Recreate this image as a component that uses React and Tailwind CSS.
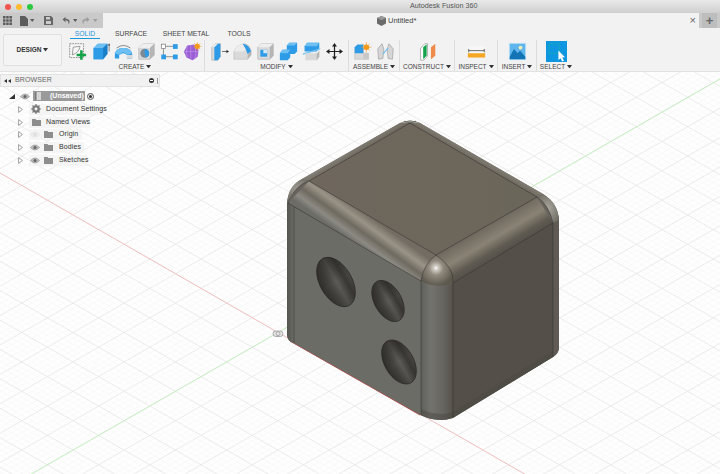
import React from "react";

const FONT = { fontFamily: '"Liberation Sans", Arial, sans-serif' };

const Caret = ({ c = "#333", w = 6, h = 4 }) => (
  <svg width={w} height={h} viewBox="0 0 6 4" className="shrink-0"><path d="M0 0H6L3 4Z" fill={c} /></svg>
);

const Icon = ({ children, size = 19 }) => (
  <svg width={size} height={size} viewBox="0 0 22 22" className="shrink-0">{children}</svg>
);

const B1 = "#2e9be6", B2 = "#6fc0f2", B3 = "#1b7fc8", G1 = "#d9d9d9", G2 = "#b5b5b5";

const I = {
  sketch: (
    <Icon>
      <rect x="2" y="2" width="16" height="16" fill="#f7f7f7" stroke="#666" strokeWidth=".8" strokeDasharray="2 1" />
      <path d="M5 15L6 6 14 5Q13 12 5 15Z" fill="none" stroke="#777" strokeWidth=".8" />
      <path d="M15 10h3v4h4v3h-4v4h-3v-4h-4v-3h4z" fill="#12a34a" transform="translate(-1 -.5)" />
    </Icon>
  ),
  extrude: (
    <Icon>
      <path d="M3 7L8 2H19V14L14 20H3Z" fill={B1} />
      <path d="M3 7H14V20H3Z" fill={B1} />
      <path d="M3 7L8 2H19L14 7Z" fill={B2} />
      <path d="M14 7L19 2V14L14 20Z" fill={B3} />
      <path d="M21 2V11" stroke="#555" strokeWidth=".8" />
      <path d="M19.8 4L21 1.6 22 4Z" fill="#333" />
    </Icon>
  ),
  revolve: (
    <Icon>
      <path d="M3 7Q11 1 19 7" fill="none" stroke="#777" strokeWidth="1" />
      <path d="M1 13Q3 7 11 7T21 13V19H15V15Q13 13 11 13T6 15V19H1Z" fill={B1} />
      <path d="M1 13Q3 7 11 7T21 13L15 15Q13 12 11 12T6 15Z" fill={B2} />
      <path d="M15 15H21V19H15Z" fill={G1} />
    </Icon>
  ),
  hole: (
    <Icon>
      <path d="M2 7L7 2H20V15L15 20H2Z" fill={G1} stroke="#999" strokeWidth=".5" />
      <path d="M2 7L7 2H20L15 7Z" fill="#efefef" />
      <path d="M15 7L20 2V15L15 20Z" fill={G2} />
      <circle cx="9" cy="13" r="5.2" fill="#7b8a96" />
      <path d="M9 13L9 8A5 5 0 0 1 14 13A5 5 0 0 1 10 18Z" fill={B1} />
    </Icon>
  ),
  pattern: (
    <Icon>
      <path d="M5 5H17M5 17H17M4 5V17" stroke="#777" strokeWidth=".9" fill="none" />
      <rect x="1.5" y="2.5" width="5" height="5" fill="#fff" stroke="#777" strokeWidth=".8" />
      <rect x="15" y="2.5" width="5.5" height="5.5" fill={B1} />
      <rect x="1.5" y="14.5" width="5.5" height="5.5" fill={B1} />
      <rect x="15" y="14.5" width="5.5" height="5.5" fill={B1} />
    </Icon>
  ),
  create: (
    <Icon>
      <path d="M1 11L5 4 13 3 18 9 17 17 11 21 4 18Z" fill="#9a5fd6" />
      <path d="M1 11L18 11M9 3.5V21M5 4Q3 12 5 18M14 4Q16 12 14 20" stroke="#c49ae8" strokeWidth=".7" fill="none" />
      <circle cx="16.5" cy="5" r="3" fill="#f59a1b" />
      <path d="M16.5 0V10M11.5 5H21.5M13 1.5L20 8.5M20 1.5L13 8.5" stroke="#f59a1b" strokeWidth=".7" />
    </Icon>
  ),
  press: (
    <Icon>
      <path d="M2 6L6 2H12V17L9 21H2Z" fill={G1} stroke="#999" strokeWidth=".5" />
      <path d="M5 6L9 2H12V17L9 21H5Z" fill={B1} />
      <path d="M5 6H2L6 2H9Z" fill="#eee" />
      <path d="M14 11H21" stroke="#333" strokeWidth=".8" />
      <path d="M19 9V13L22 11Z" fill="#333" />
    </Icon>
  ),
  fillet: (
    <Icon>
      <path d="M1 11L5 5 12 2Q19 2 21 10V15L17 20H1Z" fill={G1} stroke="#aaa" strokeWidth=".5" />
      <path d="M11 2Q19 3 21 11L17 14Q15 8 11 2Z" fill={B1} />
      <path d="M1 11L5 5 11 2 15 9 12 11Z" fill="#ececec" />
      <path d="M17 14L21 11V15L17 20Z" fill={G2} />
    </Icon>
  ),
  shell: (
    <Icon>
      <path d="M2 6L6 2H20V16L16 20H2Z" fill={G1} stroke="#999" strokeWidth=".5" />
      <path d="M2 6L6 2H20L16 6Z" fill="#eee" />
      <path d="M16 6L20 2V16L16 20Z" fill={G2} />
      <rect x="5" y="9" width="8" height="8" fill={B1} />
      <rect x="8.5" y="9" width="4.5" height="4" fill="#cfe9fa" />
    </Icon>
  ),
  combine: (
    <Icon>
      <path d="M1 13L4 9H9V4L12 1H21V11L18 14H13V18L10 21H1Z" fill={B1} />
      <path d="M9 4L12 1H21L18 4Z M1 13L4 9H13L10 13Z" fill={B2} />
    </Icon>
  ),
  offset: (
    <Icon>
      <path d="M3 5L6 1H20V7L17 11H3Z" fill={B1} />
      <path d="M3 5L6 1H20L17 5Z" fill={B2} />
      <path d="M1 12L21 6" stroke={B2} strokeWidth="1.3" transform="translate(0 2)" />
      <path d="M4 13H18L20 10V17L17 21H4Z" fill={G1} />
      <path d="M17 14L20 10V17L17 21Z" fill={G2} />
    </Icon>
  ),
  move: (
    <Icon size={17}>
      <path d="M11 3V19M3 11H19" stroke="#222" strokeWidth="1.6" />
      <path d="M11 0L14.2 4.5H7.8ZM11 22L7.8 17.5H14.2ZM0 11L4.5 7.8V14.2ZM22 11L17.5 14.2V7.8Z" fill="#222" />
    </Icon>
  ),
  newComp: (
    <Icon>
      <path d="M2 7H12V13H18V20H2Z" fill={G1} stroke="#aaa" strokeWidth=".5" />
      <path d="M2 6L5 3H12V13H2Z" fill={B1} />
      <path d="M12 13H18V20H12Z" fill="#c8c8c8" />
      <circle cx="15.5" cy="6" r="3.2" fill="#f59a1b" />
      <path d="M15.5 0V12M9.5 6H21.5M11.5 2L19.5 10M19.5 2L11.5 10" stroke="#f59a1b" strokeWidth=".7" />
    </Icon>
  ),
  joint: (
    <Icon>
      <path d="M2 8L7 2 9 8 8 19 3 20Z" fill="#d6d6d6" stroke="#888" strokeWidth=".6" />
      <path d="M20 8L15 2 13 8 14 19 19 20Z" fill="#d6d6d6" stroke="#888" strokeWidth=".6" />
      <path d="M8 14L14 7" stroke={B2} strokeWidth="1.4" />
    </Icon>
  ),
  construct: (
    <Icon>
      <path d="M3 7L8 2H11V16L7 21H3Z" fill="#fff" stroke="#888" strokeWidth=".7" />
      <path d="M6 6L10 2.5V16L6 20Z" fill="#12a34a" />
      <path d="M15 6L20 2V16L15 20Z" fill="#f08a4b" />
    </Icon>
  ),
  inspect: (
    <Icon>
      <rect x="1" y="5" width="20" height="13" fill="#f7f7f7" />
      <path d="M2 8V12M20 8V12M2 10H20" stroke="#444" strokeWidth=".9" />
      <rect x="1" y="13" width="20" height="5" fill="#f5a623" />
    </Icon>
  ),
  insert: (
    <Icon>
      <rect x="1" y="1" width="20" height="20" fill="#c8e6fa" />
      <rect x="2" y="2" width="18" height="18" fill="#5fb5ec" />
      <circle cx="14.5" cy="6.5" r="2.2" fill="#f4f0b5" />
      <path d="M2 17L7 8 11 13 14 10 20 17V20H2Z" fill="#1273b5" />
    </Icon>
  ),
  select: (
    <Icon size={21}>
      <rect x="0" y="0" width="22" height="22" fill="#0f96e0" />
      <rect x="3" y="3" width="11" height="10" fill="none" stroke="#17b7a0" strokeWidth=".9" strokeDasharray="1.5 1" />
      <path d="M13 10L13 20 15.2 18 17 21.5 18.8 20.6 17 17.4 19.8 17Z" fill="#fff" />
    </Icon>
  ),
};

const Group = ({ label, w, pl = 0, center, border = true, icons }) => (
  <div className={`flex flex-col shrink-0 ${border ? "border-r border-[#dcdcdc]" : ""}`} style={{ width: w }}>
    <div className={`flex items-center h-[22px] ${center ? "justify-center" : ""}`} style={{ paddingLeft: pl }}>
      {icons.map((ic, i) => (
        <div key={i} className="w-[23px] flex justify-center">{ic}</div>
      ))}
    </div>
    <div className="flex items-center justify-center gap-[2px] h-[9px] text-[6.5px] text-[#444] whitespace-nowrap">
      <span>{label}</span><Caret w={5} h={3.5} />
    </div>
  </div>
);

const Eye = ({ faded }) => (
  <svg width="10" height="7" viewBox="0 0 10 7" className="shrink-0">
    <path d="M.5 3.5Q5 -1.5 9.5 3.5Q5 8.5 .5 3.5Z" fill={faded ? "#eee" : "#bdbdbd"} stroke={faded ? "#ddd" : "#888"} strokeWidth=".6" />
    <circle cx="5" cy="3.5" r="1.6" fill={faded ? "#ddd" : "#666"} />
  </svg>
);

const Folder = () => (
  <svg width="9" height="7" viewBox="0 0 9 7" className="shrink-0"><path d="M0 0H3.5L4.2 1H9V7H0Z" fill="#8d8d8d" /></svg>
);

const Gear = () => (
  <svg width="10" height="10" viewBox="0 0 10 10" className="shrink-0">
    <circle cx="5" cy="5" r="3" fill="none" stroke="#7a7a7a" strokeWidth="1.7" />
    <path d="M5 0V10M0 5H10M1.5 1.5L8.5 8.5M8.5 1.5L1.5 8.5" stroke="#7a7a7a" strokeWidth="1.2" />
    <circle cx="5" cy="5" r="1.4" fill="#f2f2f2" />
  </svg>
);

const Open = () => (
  <svg width="5" height="7" viewBox="0 0 5 7" className="shrink-0"><path d="M.6.6L4.4 3.5.6 6.4Z" fill="#fff" stroke="#777" strokeWidth=".7" /></svg>
);

const Row = ({ w, eye, faded, icon, label }) => (
  <div className="flex items-center h-[12.7px]">
    <div className="w-[29px] shrink-0 flex justify-end pr-[6px]"><Open /></div>
    <div className="flex items-center bg-[#f3f3f3]/80 h-[11px] pl-[1px] gap-[2px] whitespace-nowrap" style={{ width: w }}>
      {eye && <Eye faded={faded} />}
      <div className="flex justify-center w-[10px] ml-[1px] shrink-0">{icon}</div>
      <span className={`text-[#333] text-[7px] tracking-[0.1px] ${eye ? "ml-[4px]" : "ml-[3px]"}`}>{label}</span>
    </div>
  </div>
);

function gridLines() {
  const out = [];
  const m = 0.574;
  const step = 5.88;
  for (let k = -130; k <= 130; k++) {
    const major = k % 5 === 0;
    const c1 = 173 + k * step;
    const c2 = 492 + k * step;
    const props = { stroke: major ? "#e6e6e6" : "#f6f6f6", strokeWidth: major ? 0.8 : 0.6 };
    out.push(<line key={"a" + k} x1="0" y1={c1} x2="720" y2={c1 + m * 720} {...props} />);
    out.push(<line key={"b" + k} x1="0" y1={c2} x2="720" y2={c2 - m * 720} {...props} />);
  }
  return out;
}

const Hole = ({ cx, cy, rx, ry }) => (
  <g transform={`rotate(-30 ${cx} ${cy})`}>
    <ellipse cx={cx} cy={cy} rx={rx} ry={ry} fill="url(#h1)" stroke="#2a2926" strokeWidth=".7" />
    <ellipse cx={cx} cy={cy} rx={rx} ry={ry} fill="url(#hShade)" />
  </g>
);

const Scene = () => (
  <svg className="absolute inset-0" width="720" height="402" viewBox="0 72 720 402">
    <defs>
      <linearGradient id="filletFL" gradientUnits="userSpaceOnUse" x1="372" y1="218" x2="354" y2="243">
        <stop offset="0" stopColor="#726c62" />
        <stop offset=".28" stopColor="#9a9488" />
        <stop offset=".55" stopColor="#6f6a60" />
        <stop offset=".8" stopColor="#8c8a83" />
        <stop offset="1" stopColor="#6d6d68" />
      </linearGradient>
      <linearGradient id="filletFR" gradientUnits="userSpaceOnUse" x1="487" y1="226" x2="503" y2="253">
        <stop offset="0" stopColor="#6f695f" />
        <stop offset=".45" stopColor="#8a8375" />
        <stop offset=".8" stopColor="#5f5a51" />
        <stop offset="1" stopColor="#55504a" />
      </linearGradient>
      <linearGradient id="filletBL" gradientUnits="userSpaceOnUse" x1="360" y1="152" x2="354" y2="142">
        <stop offset="0" stopColor="#6f695f" />
        <stop offset="1" stopColor="#96938c" />
      </linearGradient>
      <linearGradient id="filletBR" gradientUnits="userSpaceOnUse" x1="473" y1="160" x2="480" y2="148">
        <stop offset="0" stopColor="#6f695f" />
        <stop offset="1" stopColor="#9a978f" />
      </linearGradient>
      <linearGradient id="vcorner" gradientUnits="userSpaceOnUse" x1="421" y1="0" x2="453" y2="0">
        <stop offset="0" stopColor="#5f5f5b" />
        <stop offset=".3" stopColor="#73736e" />
        <stop offset=".7" stopColor="#66645f" />
        <stop offset="1" stopColor="#56524c" />
      </linearGradient>
      <linearGradient id="vleft" gradientUnits="userSpaceOnUse" x1="287" y1="0" x2="294" y2="0">
        <stop offset="0" stopColor="#55554f" />
        <stop offset="1" stopColor="#6c6c67" />
      </linearGradient>
      <linearGradient id="topFace" gradientUnits="userSpaceOnUse" x1="309" y1="0" x2="537" y2="0">
        <stop offset="0" stopColor="#6f675d" />
        <stop offset="1" stopColor="#6b665a" />
      </linearGradient>
      <radialGradient id="ballF" gradientUnits="userSpaceOnUse" cx="436" cy="268" r="18">
        <stop offset="0" stopColor="#ffffff" />
        <stop offset=".1" stopColor="#d8d4cc" />
        <stop offset=".4" stopColor="#908a7e" />
        <stop offset="1" stopColor="#5d584e" />
      </radialGradient>
      <radialGradient id="ballS" cx=".5" cy=".5" r=".7">
        <stop offset="0" stopColor="#a8a59c" />
        <stop offset="1" stopColor="#66635b" />
      </radialGradient>
      <linearGradient id="h1" x1="0" y1="0" x2="1" y2="0">
        <stop offset="0" stopColor="#2f2e2b" />
        <stop offset=".3" stopColor="#454440" />
        <stop offset=".52" stopColor="#5e5c58" />
        <stop offset=".78" stopColor="#3a3936" />
        <stop offset="1" stopColor="#4a4845" />
      </linearGradient>
      <linearGradient id="hShade" x1="0" y1="0" x2="0" y2="1">
        <stop offset="0" stopColor="#22211f" stopOpacity=".55" />
        <stop offset=".5" stopColor="#22211f" stopOpacity="0" />
        <stop offset="1" stopColor="#22211f" stopOpacity=".25" />
      </linearGradient>
    </defs>

    <rect x="0" y="72" width="720" height="402" fill="#fefefe" />
    {gridLines()}
    <line x1="0" y1="173" x2="720" y2="586" stroke="#f4bcbc" strokeWidth=".9" />
    <line x1="0" y1="492" x2="720" y2="79" stroke="#bff0ba" strokeWidth=".9" />

    <path d="M400 123Q410 118 420 123L543 194Q558 203 559 220V348Q559 353 553 357L452 418Q437 423 420 415L293 343Q287 340 287 335V205Q288 186 302 179Z" fill="#66635c" />
    <path d="M290 341L420 415" stroke="#b0504c" strokeWidth="1" fill="none" />
    <path d="M287 202L294 207V343H293Q287 340 287 335Z" fill="url(#vleft)" />
    <path d="M294 207L421 281V415L294 343Z" fill="#6c6c67" />
    <path d="M421 281Q437 289 453 283V418Q437 423 421 415Z" fill="url(#vcorner)" />
    <path d="M453 283L553 223V357L453 418Z" fill="#544f49" />
    <path d="M553 223L559 216V348Q559 353 553 357Z" fill="#5f5a53" />
    <path d="M453 418Q437 423 421 415V409Q437 417 453 412L553 351V357Z" fill="#4a4742" opacity=".5" />
    <path d="M309 181L410 123 400 123 302 179Z" fill="url(#filletBL)" />
    <path d="M410 123L537 197 543 194 420 123Q414 120 410 123Z" fill="url(#filletBR)" />
    <path d="M309 181L436 255 421 281 288 203Z" fill="url(#filletFL)" />
    <path d="M436 255L537 197 553 223 453 283Z" fill="url(#filletFR)" />
    <path d="M410 123L537 197 436 255 309 181Z" fill="url(#topFace)" />
    <path d="M436 255Q423 265 421 281Q437 289 453 283Q455 268 436 255Z" fill="url(#ballF)" />
    <path d="M302 179Q288 186 287 203L289 203Q294 186 309 181Z" fill="url(#ballS)" />
    <path d="M537 197Q549 205 553 223L559 220Q558 203 543 194Z" fill="url(#ballS)" />
    <path d="M400 123Q410 118 420 123L410 123Z" fill="#9c9a92" />

    <g stroke="#2e2c28" strokeWidth=".55" strokeOpacity=".85" fill="none">
      <path d="M410 123L537 197 436 255 309 181Z" />
      <path d="M288 203L421 281M453 283L553 223" />
      <path d="M294 207V343M421 281V415M453 283V418M553 223V357" />
      <path d="M436 255Q423 265 421 281M436 255Q455 268 453 283" />
      <path d="M309 181Q294 186 288 203M537 197Q549 205 553 223M404 121L410 123 416 121" />
    </g>

    <Hole cx={336} cy={282} rx={16} ry={27} />
    <Hole cx={388} cy={301} rx={13.5} ry={22.5} />
    <Hole cx={399} cy={362} rx={14.5} ry={24} />

    <g fill="#e4e4e4" stroke="#9b9b9b" strokeWidth=".8">
      <rect x="273" y="331" width="10" height="5.5" rx="2.7" />
      <circle cx="278" cy="333.7" r="2" />
    </g>
  </svg>
);

export default function App() {
  return (
    <div className="relative w-[720px] h-[474px] overflow-hidden flex flex-col bg-white" style={FONT}>
      <div className="h-[13px] shrink-0 bg-gradient-to-b from-[#e9e9e9] to-[#cfcfcf] flex items-center pl-[5px] gap-[5px]">
        <span className="w-[6px] h-[6px] rounded-full bg-[#f2544e]" />
        <span className="w-[6px] h-[6px] rounded-full bg-[#f8bc2e]" />
        <span className="w-[6px] h-[6px] rounded-full bg-[#2bc840]" />
        <span className="ml-[372px] text-[7.2px] text-[#555] whitespace-nowrap">Autodesk Fusion 360</span>
      </div>

      <div className="h-[15px] shrink-0 flex bg-[#c9c9c9]">
        <div className="w-[103px] shrink-0 flex items-center text-[#5a5a5a]">
          <svg width="9" height="9" viewBox="0 0 9 9" className="ml-[3px]">
            <path d="M0 0H2.5V2.5H0ZM3.2 0H5.7V2.5H3.2ZM6.4 0H9V2.5H6.4ZM0 3.2H2.5V5.7H0ZM3.2 3.2H5.7V5.7H3.2ZM6.4 3.2H9V5.7H6.4ZM0 6.4H2.5V9H0ZM3.2 6.4H5.7V9H3.2ZM6.4 6.4H9V9H6.4Z" fill="#5c5c5c" />
          </svg>
          <svg width="8" height="10" viewBox="0 0 8 10" className="ml-[8px]"><path d="M0 0H5L8 3V10H0Z" fill="#5c5c5c" /></svg>
          <span className="ml-[2px]"><Caret c="#5c5c5c" w={4.5} h={3} /></span>
          <svg width="9" height="9" viewBox="0 0 9 9" className="ml-[9px]">
            <path d="M0 0H7L9 2V9H0Z" fill="#666" /><rect x="2" y="1" width="4" height="2.5" fill="#ccc" /><rect x="2" y="5" width="5" height="3" fill="#ccc" />
          </svg>
          <svg width="9" height="9" viewBox="0 0 9 9" className="ml-[9px]">
            <path d="M3.5 .8L.5 3.5 3.5 6.2V4.3C5.5 4.3 6.7 5.3 6.7 8.5 8.5 5 7.5 2.7 3.5 2.7Z" fill="#666" />
          </svg>
          <span className="ml-[2px]"><Caret c="#5c5c5c" w={4.5} h={3} /></span>
          <svg width="9" height="9" viewBox="0 0 9 9" className="ml-[4px]">
            <path d="M5.5 .8L8.5 3.5 5.5 6.2V4.3C3.5 4.3 2.3 5.3 2.3 8.5 .5 5 1.5 2.7 5.5 2.7Z" fill="#9c9c9c" />
          </svg>
          <span className="ml-[3px]"><Caret c="#9c9c9c" w={4.5} h={3} /></span>
        </div>
        <div className="w-[596px] shrink-0 bg-[#f2f2f2] relative flex items-center">
          <div className="ml-[274px] flex items-center gap-[2px]">
            <svg width="9" height="10" viewBox="0 0 9 10">
              <path d="M4.5 0L9 2V7.5L4.5 10 0 7.5V2Z" fill="#6b6b6b" /><path d="M0 2L4.5 4 9 2 4.5 0Z" fill="#9a9a9a" />
            </svg>
            <span className="text-[7.5px] text-[#444]">Untitled*</span>
          </div>
          <span className="ml-auto mr-[3px] text-[11px] leading-none text-[#666]">×</span>
        </div>
        <div className="ml-[3px] w-[15px] bg-[#bdbdbd] flex items-center justify-center text-[13px] font-bold leading-none text-[#666]">+</div>
      </div>

      <div className="h-[44px] shrink-0 bg-[#f2f2f2] border-b border-[#e2e2e2] flex">
        <div className="ml-[3px] mt-[6px] w-[59px] h-[32px] shrink-0 border border-[#e0e0e0] rounded-[2px] bg-[#f4f4f4] flex items-center justify-center gap-[2px] text-[6.5px] font-bold text-[#333]">
          <span>DESIGN</span><Caret w={5} h={3.5} />
        </div>
        <div className="ml-[4px] flex flex-col">
          <div className="flex h-[11px] text-[6.8px] text-center text-[#444] whitespace-nowrap">
            <div className="ml-[4px] w-[30px] h-[11px] border-b border-[#1e96dc] text-[#1e96dc] leading-[11px]">SOLID</div>
            <div className="ml-[15px] w-[30px] leading-[12px]">SURFACE</div>
            <div className="ml-[11px] w-[60px] leading-[12px]">SHEET METAL</div>
            <div className="ml-[8px] w-[30px] leading-[12px]">TOOLS</div>
          </div>
          <div className="flex mt-[1px] h-[32px]">
            <Group label="CREATE" w={139} icons={[I.sketch, I.extrude, I.revolve, I.hole, I.pattern, I.create]} />
            <Group label="MODIFY" w={144} pl={3} icons={[I.press, I.fillet, I.shell, I.combine, I.offset, I.move]} />
            <Group label="ASSEMBLE" w={51} pl={2} icons={[I.newComp, I.joint]} />
            <Group label="CONSTRUCT" w={55} center icons={[I.construct]} />
            <Group label="INSPECT" w={43} center icons={[I.inspect]} />
            <Group label="INSERT" w={39} center icons={[I.insert]} />
            <Group label="SELECT" w={38} center border={false} icons={[I.select]} />
          </div>
        </div>
      </div>

      <div className="relative flex-1">
        <Scene />
        <div className="absolute left-0 top-[2px] w-[160px] flex flex-col">
          <div className="h-[13px] flex items-center bg-[#f1f1f1] border border-[#e2e2e2] text-[7px] text-[#666]">
            <svg width="7" height="4" viewBox="0 0 7 4" className="ml-[3px]"><path d="M3 0V4L0 2ZM7 0V4L4 2Z" fill="#333" /></svg>
            <span className="ml-[4px] tracking-[0.1px]">BROWSER</span>
            <span className="ml-auto mr-[3px] w-[5px] h-[5px] rounded-full bg-[#333] flex items-center justify-center"><span className="w-[3px] h-[1px] bg-white" /></span>
            <span className="mr-[1px] w-[1px] h-[6px] bg-[#999]" />
          </div>
          <div className="flex flex-col mt-[2px]">
            <div className="flex items-center h-[14px]">
              <svg width="6" height="5" viewBox="0 0 6 5" className="ml-[9px]"><path d="M6 0V5H0Z" fill="#333" /></svg>
              <span className="ml-[5px]"><Eye /></span>
              <div className="ml-[3px] w-[52px] h-[10px] bg-[#9a9a9a] flex items-center">
                <svg width="6" height="8" viewBox="0 0 6 8" className="ml-[2px]"><path d="M0 0H6V8H0Z" fill="#d5d5d5" /><path d="M0 0H1.5V8H0Z" fill="#777" /></svg>
                <span className="ml-[9px] text-[7px] font-bold text-white">(Unsaved)</span>
              </div>
              <span className="ml-[2px] w-[7px] h-[7px] rounded-full border border-[#555] bg-[#eee] flex items-center justify-center"><span className="w-[3px] h-[3px] rounded-full bg-[#333]" /></span>
            </div>
            <Row w={75} icon={<Gear />} label="Document Settings" />
            <Row w={61} icon={<Folder />} label="Named Views" />
            <Row w={53} eye faded icon={<Folder />} label="Origin" />
            <Row w={55} eye icon={<Folder />} label="Bodies" />
            <Row w={59} eye icon={<Folder />} label="Sketches" />
          </div>
        </div>
      </div>
    </div>
  );
}
